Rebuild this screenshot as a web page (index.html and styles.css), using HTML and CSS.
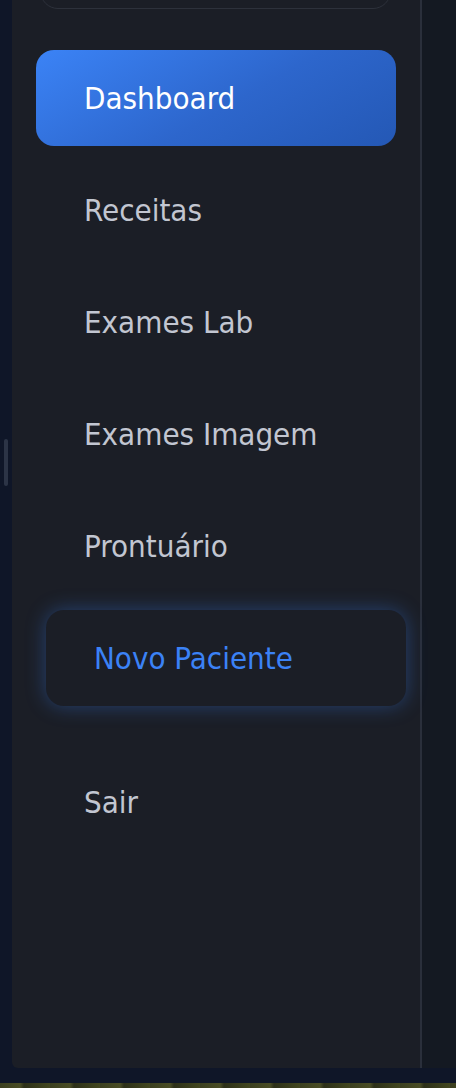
FILE: index.html
```html
<!DOCTYPE html>
<html lang="pt">
<head>
<meta charset="utf-8">
<link rel="stylesheet" href="styles.css">
</head>
<body>
<div class="app">
  <div class="rail"><div class="handle"></div></div>
  <aside class="sidebar">
    <div class="search"></div>
    <nav class="nav">
      <a class="item active">Dashboard</a>
      <a class="item">Receitas</a>
      <a class="item">Exames Lab</a>
      <a class="item">Exames Imagem</a>
      <a class="item">Prontuário</a>
      <a class="item new">Novo Paciente</a>
      <a class="item logout">Sair</a>
    </nav>
  </aside>
  <div class="main"></div>
</div>
<div class="footer"></div>
<div class="ground"></div>
</body>
</html>
```
FILE: styles.css
```css
* { box-sizing: border-box; }
html, body { margin: 0; padding: 0; }
body {
  width: 456px;
  height: 1088px;
  overflow: hidden;
  background: #0f1628;
  font-family: "DejaVu Sans Condensed", "DejaVu Sans", sans-serif;
  font-stretch: condensed;
  display: flex;
  flex-direction: column;
}
.app {
  display: flex;
  height: 1068px;
}
.rail {
  width: 12px;
  background: #0f1628;
  display: flex;
  align-items: center;
  padding-left: 4px;
}
.handle {
  width: 4px;
  height: 47px;
  border-radius: 2px;
  background: #2c3446;
  margin-top: -144px;
}
.sidebar {
  width: 410px;
  background: #1b1e26;
  border-right: 2px solid #2a2f3b;
  border-bottom-left-radius: 6px;
}
.search {
  margin: -40px 29px 0 28px;
  height: 49px;
  border: 1px solid #2d313b;
  border-radius: 18px;
}
.nav {
  display: flex;
  flex-direction: column;
  gap: 16px;
  padding: 41px 24px 0 24px;
}
.item {
  display: flex;
  align-items: center;
  height: 96px;
  padding-left: 48px;
  border-radius: 18px;
  font-size: 31px;
  color: #c2c6d1;
  text-decoration: none;
}
.item.active {
  background: linear-gradient(150deg, #3b83f6 0%, #2d66cc 55%, #2458b5 100%);
  color: #ffffff;
}
.item.new {
  transform: translateX(10px);
  color: #3b82f6;
  background: #1b1e26;
  box-shadow: 0 0 20px rgba(59, 130, 246, 0.36);
}
.item.logout {
  margin-top: 32px;
}
.main {
  flex: 1;
  background: #141922;
}
.footer {
  height: 15px;
  background: #0f1628;
}
.ground {
  flex: 1;
  background: repeating-linear-gradient(90deg, #3b3f20 0px, #4a4d25 20px, #2c2f18 24px, #43471f 50px);
}
```
